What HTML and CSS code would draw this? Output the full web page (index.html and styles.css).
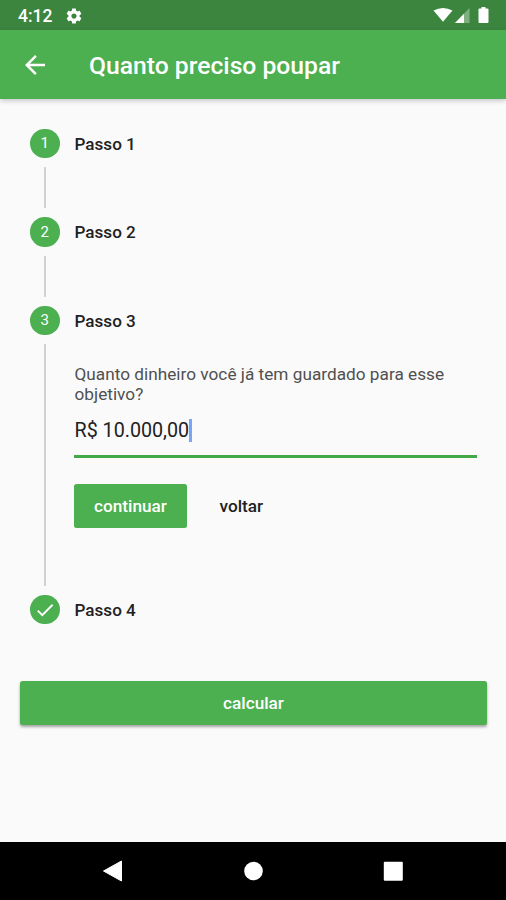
FILE: index.html
```html
<!DOCTYPE html>
<html lang="pt-BR">
<head>
<meta charset="utf-8">
<title>Quanto preciso poupar</title>
<link rel="stylesheet" href="styles.css">
</head>
<body>
<div class="status-bar">
  <span class="clock">4:12</span>
  <svg class="gear" viewBox="0 0 24 24"><path d="M19.43 12.98c.04-.32.07-.64.07-.98s-.03-.66-.07-.98l2.11-1.65c.19-.15.24-.42.12-.64l-2-3.46c-.12-.22-.39-.3-.61-.22l-2.49 1c-.52-.4-1.08-.73-1.69-.98l-.38-2.65C14.46 2.18 14.25 2 14 2h-4c-.25 0-.46.18-.49.42l-.38 2.65c-.61.25-1.17.59-1.69.98l-2.49-1c-.23-.09-.49 0-.61.22l-2 3.46c-.13.22-.07.49.12.64l2.11 1.65c-.04.32-.07.65-.07.98s.03.66.07.98l-2.11 1.65c-.19.15-.24.42-.12.64l2 3.46c.12.22.39.3.61.22l2.49-1c.52.4 1.08.73 1.69.98l.38 2.65c.03.24.24.42.49.42h4c.25 0 .46-.18.49-.42l.38-2.65c.61-.25 1.17-.59 1.69-.98l2.49 1c.23.09.49 0 .61-.22l2-3.46c.12-.22.07-.49-.12-.64l-2.11-1.65zM12 15.5c-1.930 0-3.500-1.570-3.500-3.500s1.570-3.500 3.500-3.500 3.500 1.570 3.500 3.500-1.570 3.500-3.500 3.500z"/></svg>
  <svg class="signals" viewBox="0 0 60 18">
    <path d="M1.500 3.500Q11-1.500 20.500 3.500L11 14.800Z"/>
    <path d="M23 16L37.500 1V16Z" opacity=".35"/>
    <path d="M23 16L32 6.700V16Z"/>
    <path d="M49.500 0h4v1.500h2q1 0 1 1V15q0 1-1 1h-8q-1 0-1-1V2.500q0-1 1-1h2z"/>
  </svg>
</div>
<header class="app-bar">
  <svg class="back" viewBox="0 0 24 24"><path d="M20 11H7.830l5.590-5.590L12 4l-8 8 8 8 1.410-1.410L7.830 13H20v-2z"/></svg>
  <h1>Quanto preciso poupar</h1>
</header>
<main>
  <ol class="stepper">
    <li class="step"><div class="rail"><span class="dot">1</span></div><h2>Passo 1</h2></li>
    <li class="step"><div class="rail"><span class="dot">2</span></div><h2>Passo 2</h2></li>
    <li class="step open">
      <div class="rail"><span class="dot">3</span></div>
      <div class="content">
        <h2>Passo 3</h2>
        <p>Quanto dinheiro você já tem guardado para esse objetivo?</p>
        <div class="field"><span>R$ 10.000,00</span><i class="caret"></i></div>
        <div class="actions"><button class="primary">continuar</button><button class="plain">voltar</button></div>
      </div>
    </li>
    <li class="step last"><div class="rail"><span class="dot"><svg viewBox="0 0 24 24"><path d="M9 16.170L4.830 12l-1.420 1.410L9 19 21 7l-1.410-1.410z"/></svg></span></div><h2>Passo 4</h2></li>
  </ol>
  <button class="calculate">calcular</button>
</main>
<nav class="nav-bar">
  <svg viewBox="0 0 24 24"><path d="M2.500 12L20.500 2V22Z" stroke="#fff" stroke-linejoin="round"/></svg>
  <svg viewBox="0 0 24 24"><circle cx="12.500" cy="12" r="9.300"/></svg>
  <svg viewBox="0 0 24 24"><rect x="2.800" y="2.700" width="19" height="19" rx="1"/></svg>
</nav>
</body>
</html>
```

FILE: styles.css
```css
* { box-sizing: border-box; }
body {
  margin: 0;
  height: 900px;
  display: flex;
  flex-direction: column;
  background: #fafafa;
  color: #212121;
  font-family: Roboto, sans-serif;
  overflow: hidden;
}
svg { display: block; fill: #fff; }
h1, h2, p, ol { margin: 0; padding: 0; }
button { border: 0; padding: 0; font: 500 17.2px Roboto, sans-serif; }
.status-bar {
  height: 30px;
  flex: none;
  display: flex;
  align-items: center;
  padding: 2px 14px 0 18px;
  background: #3c853f;
  color: #fff;
}
.clock { font-size: 17.5px; font-weight: 500; }
.gear { width: 18px; height: 18px; margin-left: 13px; }
.signals { width: 60px; height: 18px; margin-left: auto; }
.app-bar {
  height: 69px;
  flex: none;
  display: flex;
  align-items: center;
  padding-left: 20px;
  background: #4caf50;
  color: #fff;
  box-shadow: 0 2px 5px rgba(0, 0, 0, .2);
}
.back { width: 30px; height: 30px; }
h1 { margin-left: 39px; padding-top: 2px; font-size: 24.7px; font-weight: 500; }
main { flex: 1; padding: 29.500px 19px 0 20px; }
.stepper { list-style: none; padding: 0 10px; }
.step { display: flex; gap: 15px; height: 88.600px; }
.rail { width: 29.500px; display: flex; flex-direction: column; align-items: center; }
.rail::after { content: ""; flex: 1; width: 1.500px; margin: 9px 0; background: #d2d2d2; }
.dot {
  width: 29.500px;
  height: 29.500px;
  border-radius: 50%;
  background: #4caf50;
  color: #fff;
  display: flex;
  align-items: center;
  justify-content: center;
  font-size: 15px;
}
.dot svg { width: 22px; height: 22px; }
h2 { font-size: 17.100px; line-height: 30.500px; font-weight: 500; }
.open { height: 289.300px; }
.content { flex: 1; }
.content p { margin-top: 27.900px; font-size: 17.200px; line-height: 20px; letter-spacing: .02px; color: #505050; }
.field {
  height: 53.600px;
  margin-left: -.500px;
  display: flex;
  align-items: center;
  padding-top: 2px;
  border-bottom: 3px solid #43a847;
  font-size: 19.700px;
}
.field span { margin-left: .500px; }
.caret { width: 3px; height: 23px; background: #7ba4f4; }
.actions { display: flex; margin: 26px 0 0 -.500px; }
.primary { width: 113px; height: 44px; border-radius: 2.500px; background: #4caf50; color: #fff; }
.plain { margin-left: 32.500px; background: none; color: #212121; }
.last { height: 30px; }
.last .rail::after { display: none; }
.calculate {
  display: block;
  width: 100%;
  height: 44px;
  margin-top: 56.500px;
  border-radius: 2.500px;
  background: #4caf50;
  color: #fff;
  box-shadow: 0 2px 3px rgba(0, 0, 0, .35);
}
.nav-bar {
  height: 58px;
  flex: none;
  display: flex;
  align-items: center;
  justify-content: space-between;
  padding: 0 101px;
  background: #000;
}
.nav-bar svg { width: 24px; height: 24px; }
```
